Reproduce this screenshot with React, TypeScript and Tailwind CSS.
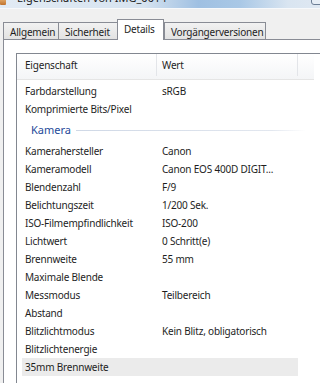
import React from 'react'

type Row = { name: string; value?: string; selected?: boolean }

const top: Row[] = [
  { name: 'Farbdarstellung', value: 'sRGB' },
  { name: 'Komprimierte Bits/Pixel' },
]

const camera: Row[] = [
  { name: 'Kamerahersteller', value: 'Canon' },
  { name: 'Kameramodell', value: 'Canon EOS 400D DIGIT...' },
  { name: 'Blendenzahl', value: 'F/9' },
  { name: 'Belichtungszeit', value: '1/200 Sek.' },
  { name: 'ISO-Filmempfindlichkeit', value: 'ISO-200' },
  { name: 'Lichtwert', value: '0 Schritt(e)' },
  { name: 'Brennweite', value: '55 mm' },
  { name: 'Maximale Blende' },
  { name: 'Messmodus', value: 'Teilbereich' },
  { name: 'Abstand' },
  { name: 'Blitzlichtmodus', value: 'Kein Blitz, obligatorisch' },
  { name: 'Blitzlichtenergie' },
  { name: '35mm Brennweite', selected: true },
]

const tabs = [
  { label: 'Allgemein', w: 'w-[56px]' },
  { label: 'Sicherheit', w: 'w-[60px]' },
  { label: 'Details', w: 'w-[47px]', active: true },
  { label: 'Vorgängerversionen', w: 'w-[102px]' },
]

function PropRow({ row }: { row: Row }) {
  return (
    <div className={'ml-[5px] flex h-[18px] w-[276px] items-center leading-[18px] ' + (row.selected ? 'bg-[#ebebeb]' : '')}>
      <span className="w-[135px] shrink-0 whitespace-nowrap pl-[3px]">{row.name}</span>
      <span className="whitespace-nowrap pl-[5px]">{row.value}</span>
    </div>
  )
}

export default function App() {
  return (
    <div className="relative flex h-[383px] w-[320px] flex-col overflow-hidden bg-[#f0f0f0] font-['Segoe_UI','Noto_Sans',sans-serif] text-[10px] leading-[14px] tracking-[-0.2px] text-[#1e1e1e]">
      {/* title bar, mostly scrolled off */}
      <div className="relative h-[9px] shrink-0 overflow-hidden border-b border-[#f7f9fb] bg-[linear-gradient(to_right,#e2ebf4,#d6e3f0_45%,#9fc0e2_62%,#a9c8e6_75%,#d9e5f1_90%,#dfe8f2)]">
        <div className="absolute left-0 top-[-4px] h-[9px] w-[6px] rounded-[1px] bg-[linear-gradient(#f5c88a,#c0732e)]" />
        <div className="absolute left-[17px] top-[-9px] whitespace-nowrap text-[11px] leading-[14px] tracking-normal text-[#1a1a1a]">Eigenschaften von IMG_0014</div>
        <div className="absolute left-[311px] top-[-6px] h-[11px] w-[20px] rounded-[3px] border border-[#6d7f96] bg-[#e7eef6]" />
      </div>

      {/* tabs */}
      <div className="mt-[10px] flex h-[20px] shrink-0 items-end pl-[3px]">
        {tabs.map((t) =>
          t.active ? (
            <div
              key={t.label}
              className={`${t.w} relative z-10 -mb-px -ml-px flex h-[21px] items-start whitespace-nowrap border border-b-0 border-[#898c95] bg-white pl-[6px] pt-[2px]`}
            >
              {t.label}
            </div>
          ) : (
            <div
              key={t.label}
              className={`${t.w} flex h-[17px] items-center whitespace-nowrap border border-b-0 border-[#898c95] bg-[linear-gradient(#f2f2f2,#e2e2e2)] pl-[6px] pt-[1px] [&+&]:-ml-px`}
            >
              {t.label}
            </div>
          ),
        )}
      </div>

      {/* panel */}
      <div className="ml-[3px] flex-1 border-l border-t border-[#898c95] bg-white pl-[12px] pt-[13px]">
        <div className="flex h-[400px] border-l border-t border-[#828790]">
          <div className="w-[297px] shrink-0">
            {/* header */}
            <div className="flex h-[26px] items-center border-b border-[#e5e5e5] bg-[linear-gradient(#ffffff,#f4f5f7)] pb-[3px]">
              <div className="flex h-full w-[140px] items-center border-r border-[#e3e5e9] pl-[8px]">Eigenschaft</div>
              <div className="flex h-full w-[141px] items-center border-r border-[#e3e5e9] pl-[5px]">Wert</div>
              <div className="flex-1" />
            </div>
            <div className="pt-[2px]">
              {top.map((r) => (
                <PropRow key={r.name} row={r} />
              ))}
              <div className="flex h-[24px] items-center pl-[14px]">
                <span className="text-[11px] tracking-normal text-[#1e4a9a]">Kamera</span>
                <div className="ml-[5px] h-px w-[230px] bg-[linear-gradient(to_right,#cfd8e6,#e2e7ef_85%,#ffffff)]" />
              </div>
              {camera.map((r) => (
                <PropRow key={r.name} row={r} />
              ))}
            </div>
          </div>
          <div className="h-full w-[16px] shrink-0 bg-[linear-gradient(#ffffff_0,#ffffff_26px,transparent_26px)]" />
          {/* scrollbar */}
          <div className="relative h-full w-[17px] shrink-0 border-l border-[#e0e0e0] bg-[#eeeeee]">
            <div className="absolute left-[1px] top-[122px] h-[80px] w-[14px] rounded-[2px] border border-[#9a9a9a] bg-[#e2e2e2]" />
          </div>
        </div>
      </div>
    </div>
  )
}
